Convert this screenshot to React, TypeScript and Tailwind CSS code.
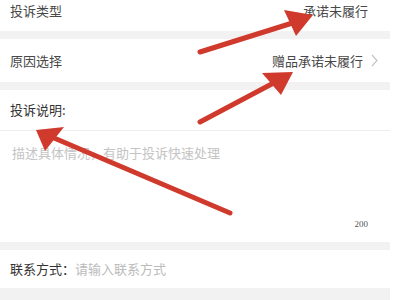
export default function App() {
  return (
    <div className="relative h-[300px] w-[400px] overflow-hidden bg-white font-['Noto_Sans_CJK_SC',sans-serif]">
      <div className="flex h-[300px] w-[390px] flex-col bg-[#f2f2f2]">
        {/* 投诉类型 */}
        <div className="flex h-[31px] items-center justify-between bg-white pl-[10px] pr-[22px] text-[13px] text-[#484848]">
          <span className="-mt-[10px]">投诉类型</span>
          <span className="-mt-[10px]">承诺未履行</span>
        </div>

        {/* 原因选择 */}
        <div className="mt-[8px] flex h-[43px] items-center justify-between bg-white pl-[10px] pr-[12px] text-[13px] text-[#484848]">
          <span>原因选择</span>
          <span className="flex items-center gap-[8px]">
            赠品承诺未履行
            <svg width="7" height="13" viewBox="0 0 7 13" fill="none">
              <path d="M1 1l5 5.5L1 12" stroke="#c4c4c4" strokeWidth="1.2" />
            </svg>
          </span>
        </div>

        {/* 投诉说明 */}
        <div className="mt-[8px] flex flex-col bg-white">
          <div className="flex h-[41px] items-center border-b border-[#eee] pl-[10px] text-[13px] text-[#333]">
            投诉说明:
          </div>
          <div className="flex h-[111px] flex-col justify-between pb-[11px] pl-[12px] pr-[22px] pt-[12px]">
            <span className="text-[13px] text-[#c4c4c4]">描述具体情况，有助于投诉快速处理</span>
            <span className="self-end font-['Liberation_Serif',serif] text-[9px] text-[#555]">200</span>
          </div>
        </div>

        {/* 联系方式 */}
        <div className="mt-[8px] flex h-[38px] items-center bg-white pl-[10px] text-[13px]">
          <span className="text-[#333]">联系方式：</span>
          <span className="text-[#bbb]">请输入联系方式</span>
        </div>
      </div>

      {/* annotation arrows */}
      <svg className="absolute left-0 top-0" width="400" height="300" viewBox="0 0 400 300">
        <g stroke="#d03a2d" strokeWidth="5" strokeLinecap="round">
          <line x1="200" y1="52" x2="302" y2="20" />
          <line x1="200" y1="122" x2="283" y2="78" />
          <line x1="230" y1="213" x2="47" y2="135" />
        </g>
        <g fill="#d03a2d">
          <polygon points="313,15 284,10 296,36" />
          <polygon points="293,72 262,73 281,95" />
          <polygon points="36,130 64,127 45,151" />
        </g>
      </svg>
    </div>
  );
}
